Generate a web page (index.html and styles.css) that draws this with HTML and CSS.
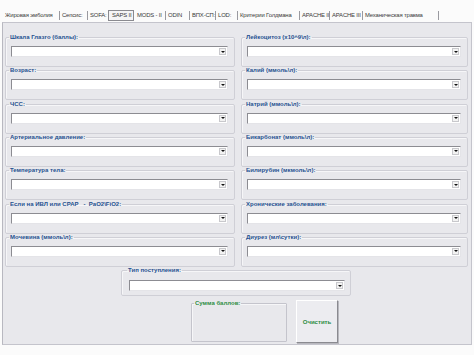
FILE: index.html
```html
<!DOCTYPE html>
<html lang="ru">
<head>
<meta charset="utf-8">
<link rel="stylesheet" href="styles.css">
</head>
<body>
<div class="tabs">
  <span class="tab">Жировая эмболия</span>
  <span class="tab">Сепсис:</span>
  <span class="tab nosep">SOFA:</span>
  <span class="tab active">SAPS II</span>
  <span class="tab">MODS - II</span>
  <span class="tab">ODIN</span>
  <span class="tab">ВПХ-СП:</span>
  <span class="tab">LOD:</span>
  <span class="tab">Критерии Голдмана</span>
  <span class="tab">APACHE II</span>
  <span class="tab">APACHE III</span>
  <span class="tab">Механическая травма</span>
</div>
<div class="panel">
  <div class="grid">
    <fieldset class="group"><legend>Шкала Глазго (баллы):</legend><div class="combo"><span class="drop"></span></div></fieldset>
    <fieldset class="group"><legend>Лейкоцитоз (x10^9\л):</legend><div class="combo"><span class="drop"></span></div></fieldset>
    <fieldset class="group"><legend>Возраст:</legend><div class="combo"><span class="drop"></span></div></fieldset>
    <fieldset class="group"><legend>Калий (ммоль\л):</legend><div class="combo"><span class="drop"></span></div></fieldset>
    <fieldset class="group"><legend>ЧСС:</legend><div class="combo"><span class="drop"></span></div></fieldset>
    <fieldset class="group"><legend>Натрий (ммоль\л):</legend><div class="combo"><span class="drop"></span></div></fieldset>
    <fieldset class="group"><legend>Артериальное давление:</legend><div class="combo"><span class="drop"></span></div></fieldset>
    <fieldset class="group"><legend>Бикарбонат (ммоль\л):</legend><div class="combo"><span class="drop"></span></div></fieldset>
    <fieldset class="group"><legend>Температура тела:</legend><div class="combo"><span class="drop"></span></div></fieldset>
    <fieldset class="group"><legend>Билирубин (мкмоль\л):</legend><div class="combo"><span class="drop"></span></div></fieldset>
    <fieldset class="group"><legend>Если на ИВЛ или CPAP &nbsp; - &nbsp;PaO2\FiO2:</legend><div class="combo"><span class="drop"></span></div></fieldset>
    <fieldset class="group"><legend>Хронические заболевания:</legend><div class="combo"><span class="drop"></span></div></fieldset>
    <fieldset class="group"><legend>Мочевина (ммоль\л):</legend><div class="combo"><span class="drop"></span></div></fieldset>
    <fieldset class="group"><legend>Диурез (мл\сутки):</legend><div class="combo"><span class="drop"></span></div></fieldset>
  </div>
  <fieldset class="group admission"><legend>Тип поступления:</legend><div class="combo"><span class="drop"></span></div></fieldset>
  <div class="bottom">
    <fieldset class="sum"><legend>Сумма баллов:</legend></fieldset>
    <button class="clear" type="button">Очистить</button>
  </div>
</div>
</body>
</html>
```
FILE: styles.css
```css
html, body {
  margin: 0;
  padding: 0;
}
body {
  width: 474px;
  height: 355px;
  background: #fbfbfb;
  font-family: "Liberation Sans", Arial, sans-serif;
  overflow: hidden;
}
.tabs {
  display: grid;
  grid-template-columns: 57px 28px 20px 27px 31px 24px 26px 22px 62px 30px 33px 76px;
  margin: 9px 0 0 3px;
  height: 13px;
  align-items: center;
}
.tab {
  font-size: 5.9px;
  letter-spacing: -0.15px;
  color: #3a3a3a;
  padding-left: 2px;
  line-height: 9px;
  border-right: 1px solid #9a9aa0;
  white-space: nowrap;
}
.tab.nosep {
  border-right-color: transparent;
}
.tab.active {
  border: 1px solid #8a8a90;
  background: #f4f4f6;
  line-height: 9px;
  margin-right: 1px;
  padding-left: 3px;
}
.panel {
  margin: 0 2px;
  height: 323px;
  box-sizing: border-box;
  background: #e8e8ec;
  border: 1px solid #c4c4cc;
  border-left-color: #b8b8c0;
  padding: 11px 3px 0 2px;
}
.grid {
  display: grid;
  grid-template-columns: 230px 227px;
  grid-auto-rows: 33.33px;
  column-gap: 6px;
}
.group {
  margin: 0;
  padding: 0 6px 0 5px;
  min-width: 0;
  height: 33px;
  box-sizing: border-box;
  border: 1px solid #cfcfd6;
  border-radius: 2px;
  box-shadow: inset 1px 1px 0 #f6f6f8;
}
.group legend, .sum legend {
  font-size: 6px;
  line-height: 7px;
  font-weight: bold;
  color: #25508f;
  padding: 0 1px;
  margin-left: -2px;
  white-space: pre;
}
.combo {
  margin-top: 5px;
  height: 11px;
  box-sizing: border-box;
  background: #fff;
  border: 1px solid;
  border-color: #8c8c92 #e4e4e8 #e4e4e8 #8c8c92;
  display: flex;
  justify-content: flex-end;
  align-items: center;
  padding-right: 1px;
}
.drop {
  width: 7px;
  height: 7px;
  box-sizing: border-box;
  border: 1px solid #c8c8cc;
  background: #f2f2f2;
  display: flex;
  align-items: center;
  justify-content: center;
}
.drop::after {
  content: "";
  border-left: 2px solid transparent;
  border-right: 2px solid transparent;
  border-top: 2px solid #111;
}
.admission {
  width: 230px;
  height: 29px;
  margin: 0 0 0 116px;
  padding: 0 5px 0 7px;
}
.admission .combo {
  margin-top: 6px;
}
.bottom {
  display: flex;
  align-items: flex-start;
  gap: 9px;
  margin: 4px 0 0 186px;
}
.sum {
  margin: 0;
  width: 96px;
  height: 42px;
  box-sizing: border-box;
  padding: 0 4px;
  border: 1px solid #c4c4cc;
  border-radius: 1px;
  box-shadow: inset 1px 1px 0 #f6f6f8;
}
.sum legend {
  color: #2d8c43;
}
.clear {
  width: 42px;
  height: 43px;
  margin-top: 0;
  padding: 0;
  font-family: "Liberation Sans", Arial, sans-serif;
  font-size: 6px;
  font-weight: bold;
  color: #2d8c43;
  background: #ececf0;
  border: 1px solid;
  border-color: #ffffff #8a8a90 #8a8a90 #ffffff;
  box-shadow: 1px 1px 0 #b8b8be;
}
```
